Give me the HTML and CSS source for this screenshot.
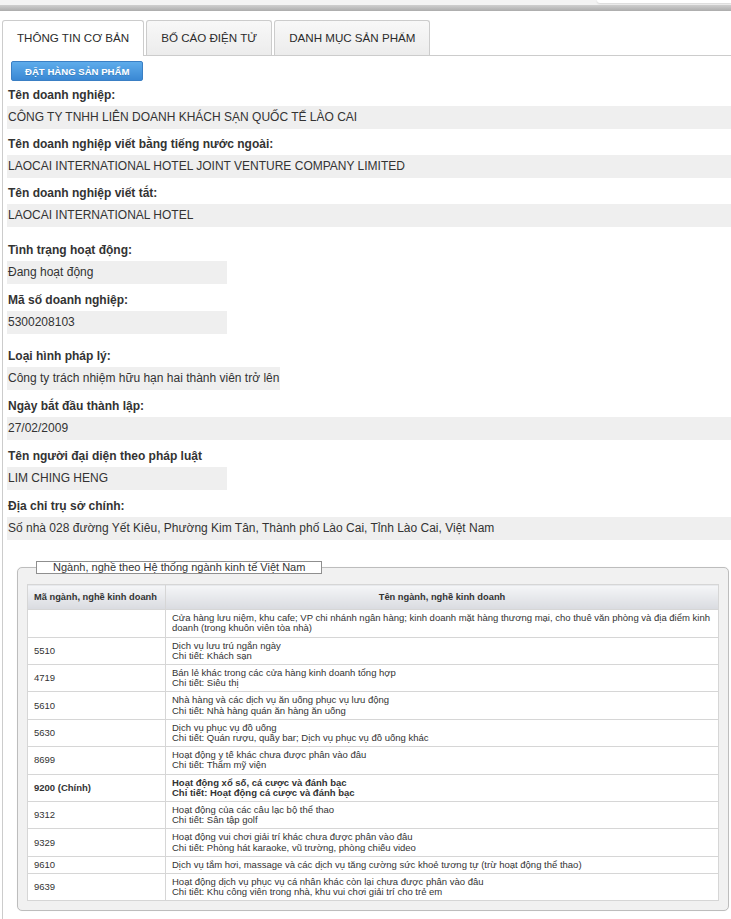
FILE: index.html
```html
<!DOCTYPE html>
<html lang="vi">
<head>
  <meta charset="UTF-8">
  <title>Thông tin doanh nghiệp</title>
  <link rel="stylesheet" href="styles.css">
</head>
<body>
  <!-- thanh trên cùng -->
  <div class="topbar"><div class="search"></div></div>
  <div class="rule"></div>

  <div class="page">
    <ul class="tabs">
      <li class="tab active">THÔNG TIN CƠ BẢN</li>
      <li class="tab">BỐ CÁO ĐIỆN TỬ</li>
      <li class="tab">DANH MỤC SẢN PHẨM</li>
    </ul>

    <div class="panel">
      <button class="order-btn">ĐẶT HÀNG SẢN PHẨM</button>

      <div class="info-main">
        <div class="field">
          <div class="label">Tên doanh nghiệp:</div>
          <div class="value">CÔNG TY TNHH LIÊN DOANH KHÁCH SẠN QUỐC TẾ LÀO CAI</div>
        </div>
        <div class="field">
          <div class="label">Tên doanh nghiệp viết bằng tiếng nước ngoài:</div>
          <div class="value">LAOCAI INTERNATIONAL HOTEL JOINT VENTURE COMPANY LIMITED</div>
        </div>
        <div class="field">
          <div class="label">Tên doanh nghiệp viết tắt:</div>
          <div class="value">LAOCAI INTERNATIONAL HOTEL</div>
        </div>
      </div>

      <div class="info-detail">
        <div class="field">
          <div class="label">Tình trạng hoạt động:</div>
          <div class="value short">Đang hoạt động</div>
        </div>
        <div class="field">
          <div class="label">Mã số doanh nghiệp:</div>
          <div class="value short">5300208103</div>
        </div>
        <div class="field gap">
          <div class="label">Loại hình pháp lý:</div>
          <div class="value short">Công ty trách nhiệm hữu hạn hai thành viên trở lên</div>
        </div>
        <div class="field">
          <div class="label">Ngày bắt đầu thành lập:</div>
          <div class="value">27/02/2009</div>
        </div>
        <div class="field">
          <div class="label">Tên người đại diện theo pháp luật</div>
          <div class="value short">LIM CHING HENG</div>
        </div>
        <div class="field">
          <div class="label">Địa chỉ trụ sở chính:</div>
          <div class="value">Số nhà 028 đường Yết Kiêu, Phường Kim Tân, Thành phố Lào Cai, Tỉnh Lào Cai, Việt Nam</div>
        </div>
      </div>

      <!-- ngành nghề kinh doanh -->
      <fieldset class="industries">
        <legend>Ngành, nghề theo Hệ thống ngành kinh tế Việt Nam</legend>
        <table>
          <colgroup><col class="col-code"><col></colgroup>
          <thead>
            <tr><th class="th-code">Mã ngành, nghề kinh doanh</th><th>Tên ngành, nghề kinh doanh</th></tr>
          </thead>
          <tbody>
            <tr><td></td><td>Cửa hàng lưu niệm, khu cafe; VP chi nhánh ngân hàng; kinh doanh mặt hàng thương mại, cho thuê văn phòng và địa điểm kinh doanh (trong khuôn viên tòa nhà)</td></tr>
            <tr><td>5510</td><td>Dịch vụ lưu trú ngắn ngày<br>Chi tiết: Khách sạn</td></tr>
            <tr><td>4719</td><td>Bán lẻ khác trong các cửa hàng kinh doanh tổng hợp<br>Chi tiết: Siêu thị</td></tr>
            <tr><td>5610</td><td>Nhà hàng và các dịch vụ ăn uống phục vụ lưu động<br>Chi tiết: Nhà hàng quán ăn hàng ăn uống</td></tr>
            <tr><td>5630</td><td>Dịch vụ phục vụ đồ uống<br>Chi tiết: Quán rượu, quầy bar; Dịch vụ phục vụ đồ uống khác</td></tr>
            <tr><td>8699</td><td>Hoạt động y tế khác chưa được phân vào đâu<br>Chi tiết: Thẩm mỹ viện</td></tr>
            <tr class="main"><td>9200 (Chính)</td><td>Hoạt động xổ số, cá cược và đánh bạc<br>Chi tiết: Hoạt động cá cược và đánh bạc</td></tr>
            <tr><td>9312</td><td>Hoạt động của các câu lạc bộ thể thao<br>Chi tiết: Sân tập golf</td></tr>
            <tr><td>9329</td><td>Hoạt động vui chơi giải trí khác chưa được phân vào đâu<br>Chi tiết: Phòng hát karaoke, vũ trường, phòng chiếu video</td></tr>
            <tr><td>9610</td><td>Dịch vụ tắm hơi, massage và các dịch vụ tăng cường sức khoẻ tương tự (trừ hoạt động thể thao)</td></tr>
            <tr><td>9639</td><td>Hoạt động dịch vụ phục vụ cá nhân khác còn lại chưa được phân vào đâu<br>Chi tiết: Khu công viên trong nhà, khu vui chơi giải trí cho trẻ em</td></tr>
          </tbody>
        </table>
      </fieldset>
    </div>
  </div>
</body>
</html>
```

FILE: styles.css
```css
html, body {
  margin: 0;
  padding: 0;
  background: #ffffff;
  color: #333333;
  font-family: "Liberation Sans", Arial, sans-serif;
  font-size: 12px;
  overflow: hidden;
}

/* thanh trên cùng */
.topbar {
  height: 5px;
  background: #f3f3f3;
  display: flex;
  justify-content: flex-end;
}
.search {
  width: 134px;
  height: 3px;
  background: #ffffff;
  border-radius: 0 0 0 3px;
  box-shadow: 0 1px 2px rgba(0, 0, 0, 0.12);
}
.rule {
  height: 6px;
  background: linear-gradient(#cfcfcf, #acacac);
}

.page {
  margin: 9px 0 0 2px;
}

/* tabs */
.tabs {
  list-style: none;
  margin: 0;
  padding: 0;
  display: flex;
  gap: 2px;
  border-bottom: 1px solid #cccccc;
}
.tab {
  height: 34px;
  line-height: 34px;
  padding: 0 14px;
  border: 1px solid #cccccc;
  border-bottom: none;
  border-radius: 3px 3px 0 0;
  background: linear-gradient(#f8f8f8, #ececec);
  color: #2b2b2b;
  font-size: 11.6px;
  margin-bottom: -1px;
}
.tab.active {
  background: #ffffff;
  height: 35px;
}

.panel {
  border-left: 1px solid #cccccc;
  padding: 5px 0 10px 5px;
}

.order-btn {
  display: block;
  height: 20px;
  margin: 0 0 4px 3px;
  padding: 0 13px;
  border: 1px solid #3a7fc4;
  border-radius: 2px;
  background: linear-gradient(#5eaceb, #3a88d4);
  color: #ffffff;
  font-family: "Liberation Sans", Arial, sans-serif;
  font-size: 9.6px;
  font-weight: bold;
  text-shadow: 0 1px 0 rgba(0, 0, 0, 0.15);
}

/* các trường thông tin */
.field {
  margin-bottom: 5px;
}
.label {
  line-height: 21px;
  font-weight: bold;
}
.value {
  height: 23px;
  line-height: 23px;
  background: #efefef;
  margin-left: -1px;
  padding: 0 1px;
  white-space: nowrap;
}
.value.short {
  width: fit-content;
  min-width: 218px;
}

.info-detail {
  margin-top: 13px;
}
.info-detail .field {
  margin-bottom: 6px;
}
.info-detail .field.gap {
  margin-top: 12px;
}

/* ngành nghề */
.industries {
  margin: 21px 2px 0 9px;
  padding: 10px 9px 9px 9px;
  border: 1px solid #bdbdbd;
  border-radius: 5px;
  background: #f1f1f1;
  box-shadow: 0 0 1px rgba(0, 0, 0, 0.1);
}
.industries legend {
  margin-left: 9px;
  padding: 0 16px;
  border: 1px solid #8f8f8f;
  background: #ffffff;
  font-size: 11px;
  line-height: 11px;
  color: #333333;
}

table {
  width: 100%;
  border-collapse: collapse;
  table-layout: fixed;
  background: #ffffff;
  border: 1px solid #dcdcdc;
  font-size: 9.5px;
  line-height: 10.2px;
  color: #333333;
}
.col-code {
  width: 138px;
}
th {
  padding: 7px 6px;
  font-size: 9.3px;
  font-weight: bold;
  text-align: center;
  white-space: nowrap;
  background: linear-gradient(#f5f6f8, #d9dbe0);
  border: 1px solid #d6d6d6;
}
th.th-code {
  text-align: left;
}
td {
  padding: 3px 0 3px 6px;
  border: 1px solid #d6d6d6;
  vertical-align: middle;
}
tr.main td {
  font-weight: bold;
}
```
